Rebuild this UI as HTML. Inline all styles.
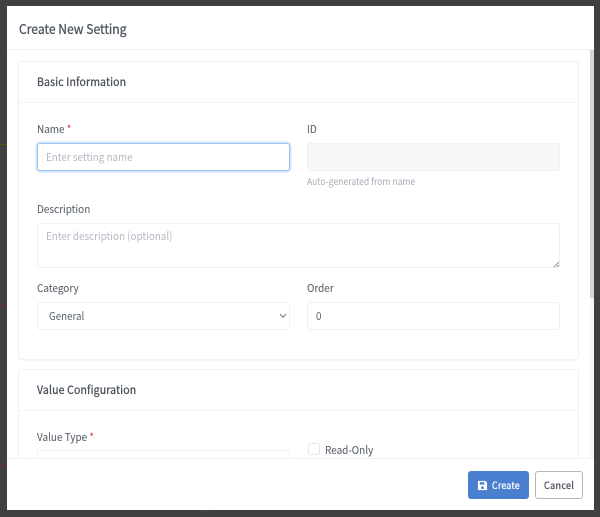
<!DOCTYPE html>
<html><head><meta charset="utf-8"><style>
*{box-sizing:border-box;margin:0;padding:0}
html,body{width:600px;height:517px;overflow:hidden;background:#404040;font-family:"Noto Sans CJK JP","Liberation Sans",sans-serif}
div,span,svg{position:absolute}
#w{left:0;top:0;width:600px;height:517px;filter:blur(.35px)}
.t{white-space:nowrap;line-height:14px;transform:scaleX(.905);transform-origin:0 50%}
.l{font-size:11px;color:#5f666f;-webkit-text-stroke:.1px #5f666f}
.i{background:#fff;border:1px solid #eff1f3;border-radius:3px}
.h{font-size:11.6px;color:#4a515b;letter-spacing:.17px;-webkit-text-stroke:.3px #4a515b}
.ph{font-size:10.9px;color:#b5bac2}
.c{background:#fff;border:1px solid #f0f1f3;border-radius:4px}
</style></head><body><div id="w">
<div style="left:0;top:144px;width:7px;height:1px;background:#3f5a1e"></div>
<div style="left:0;top:305px;width:7px;height:1px;background:#6a2a2a"></div>
<div style="left:0;top:465px;width:7px;height:1px;background:#6a2a2a"></div>
<div style="left:203px;top:510px;width:6px;height:4px;background:#364858;border-radius:0 0 3px 3px"></div>
<div style="left:7px;top:6px;width:587px;height:504px;background:#fff;overflow:hidden">
  <div style="left:0;top:43px;width:587px;height:1px;background:#eff1f3"></div>
  <div style="left:583px;top:44px;width:4px;height:248px;background:#d3d7db"></div>
  <div style="left:583px;top:292px;width:4px;height:160px;background:#f6f7f8"></div>
  <div class="c" style="left:11px;top:55px;width:561px;height:299px;box-shadow:0 1px 1px rgba(0,0,0,.04)"></div>
  <div style="left:12px;top:96px;width:559px;height:1px;background:#f2f3f5"></div>
  <div class="c" style="left:11px;top:363px;width:561px;height:120px"></div>
  <div style="left:12px;top:404px;width:559px;height:1px;background:#f2f3f5"></div>
  <div class="i" style="left:30px;top:137px;width:253px;height:28px;border:1px solid #9cc4f0;box-shadow:0 0 0 1.5px #d4e6f9"></div>
  <div class="i" style="left:300px;top:137px;width:253px;height:28px;background:#f6f7f9"></div>
  <div class="i" style="left:30px;top:217px;width:523px;height:45px"></div>
  <svg style="left:546px;top:255px" width="7" height="7" viewBox="0 0 7 7"><path d="M1 6L6 1M4 6L6 4" stroke="#777" stroke-width=".8" fill="none"/></svg>
  <div class="i" style="left:30px;top:296px;width:253px;height:28px"></div>
  <svg style="left:272px;top:307px" width="8" height="6" viewBox="0 0 8 6"><path d="M1 1.2L4 4.2L7 1.2" stroke="#666" stroke-width="1" fill="none"/></svg>
  <div class="i" style="left:300px;top:296px;width:253px;height:28px"></div>
  <div class="i" style="left:30px;top:444px;width:253px;height:28px"></div>
  <div class="i" style="left:301px;top:437px;width:12px;height:12px;border-color:#e4e6e9"></div>

  <span class="t" style="left:11.7px;top:15px;font-size:13.4px;color:#4d545e;-webkit-text-stroke:.3px #4d545e">Create New Setting</span>
  <span class="t h" style="left:29.7px;top:69px">Basic Information</span>
  <span class="t l" style="left:29.7px;top:116px">Name <span style="position:static;color:#dc3545;-webkit-text-stroke:0">*</span></span>
  <span class="t l" style="left:300px;top:116px">ID</span>
  <span class="t ph" style="left:39px;top:144px">Enter setting name</span>
  <span class="t" style="left:300px;top:168px;font-size:9.5px;color:#a6abb4">Auto-generated from name</span>
  <span class="t l" style="left:29.7px;top:196px">Description</span>
  <span class="t ph" style="left:39px;top:223px">Enter description (optional)</span>
  <span class="t l" style="left:29.7px;top:275px">Category</span>
  <span class="t l" style="left:300px;top:275px">Order</span>
  <span class="t" style="left:42px;top:303px;font-size:10.8px;color:#5a616b">General</span>
  <span class="t" style="left:309px;top:303px;font-size:10.8px;color:#5a616b">0</span>
  <span class="t h" style="left:29.7px;top:377px">Value Configuration</span>
  <span class="t l" style="left:29.7px;top:424px">Value Type <span style="position:static;color:#dc3545;-webkit-text-stroke:0">*</span></span>
  <span class="t l" style="left:318px;top:437px">Read-Only</span>

  <div style="left:0;top:452px;width:587px;height:52px;background:#fff;border-top:1px solid #eff1f3"></div>
  <div style="left:461px;top:465px;width:61px;height:27.5px;background:#4a7fd0;border-radius:3px"></div>
  <svg style="left:470px;top:473.5px" width="11" height="11" viewBox="0 0 12 12"><path fill-rule="evenodd" d="M1.5 1H9l2 2v7.5c0 .3-.3.5-.5.5h-9c-.3 0-.5-.2-.5-.5v-9c0-.3.2-.5.5-.5zM3 2.5V5h5V2.5zM6 7a1.5 1.5 0 1 0 0 3 1.5 1.5 0 0 0 0-3z" fill="#fff"/></svg>
  <span class="t" style="left:484.5px;top:472px;font-size:9.8px;color:#fff;letter-spacing:.2px;-webkit-text-stroke:.25px #fff">Create</span>
  <div style="left:527.5px;top:465px;width:48px;height:27.5px;background:#fff;border:1px solid #b4b8bd;border-radius:3px"></div>
  <span class="t" style="left:537px;top:472px;font-size:10px;color:#4a515b;letter-spacing:.35px;-webkit-text-stroke:.25px #4a515b">Cancel</span>
</div>
</div></body></html>
